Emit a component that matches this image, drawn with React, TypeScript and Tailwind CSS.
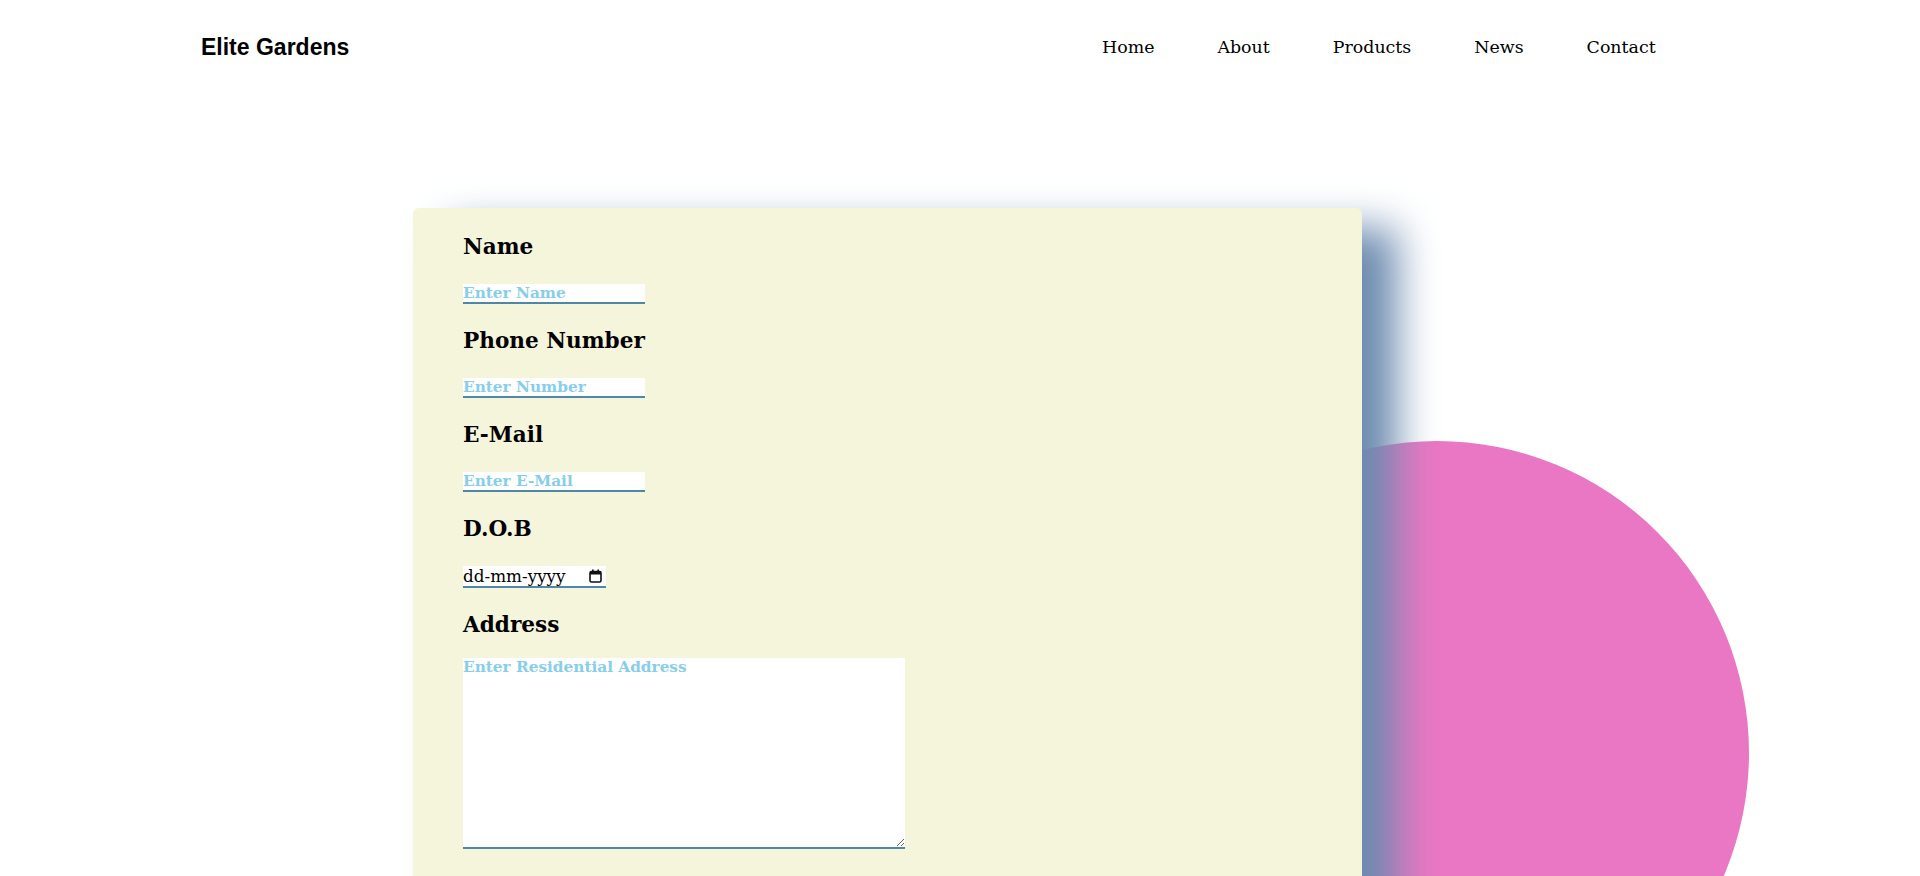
export default function App() {
  const links = ["Home", "About", "Products", "News", "Contact"];
  const inputCls =
    "block w-[182px] h-[20px] bg-white border-b-2 border-[#4f88a6] p-0 text-[15.3px] leading-[18px] font-bold text-[#87ceeb] placeholder:text-[#87ceeb] placeholder:font-bold outline-none";
  const labelCls = "block text-[21.6px] leading-[22px] font-bold text-black";
  return (
    <div className="relative min-h-[2140px] bg-white font-['DejaVu_Serif',serif] text-black overflow-hidden">
      <header className="flex items-start pl-[201px] h-[90px]">
        <div className="w-[901px] shrink-0 pt-[34px] font-['Liberation_Sans',Arial,sans-serif] font-bold text-[23px] leading-[26px]">
          Elite Gardens
        </div>
        <nav className="pt-[37px]">
          <ul className="flex gap-[63px] text-[17.4px] leading-[20px]">
            {links.map((l) => (
              <li key={l}>
                <a href="#" className="text-black no-underline">
                  {l}
                </a>
              </li>
            ))}
          </ul>
        </nav>
      </header>

      <div
        aria-hidden
        className="absolute left-[1125px] top-[441px] w-[624px] h-[624px] rounded-full bg-[#ea77c3]"
      />

      <main className="relative z-10 pt-[118px] pl-[413px]">
        <form className="w-[949px] rounded-[6px] bg-[#f5f5dc] shadow-[35px_20px_40px_#6d8bb0] pl-[50px] pt-[28px] pb-[120px] flex flex-col items-start">
          <label className={labelCls}>Name</label>
          <input type="text" placeholder="Enter Name" className={inputCls + " mt-[26px]"} />

          <label className={labelCls + " mt-[26px]"}>Phone Number</label>
          <input type="text" placeholder="Enter Number" className={inputCls + " mt-[26px]"} />

          <label className={labelCls + " mt-[26px]"}>E-Mail</label>
          <input type="text" placeholder="Enter E-Mail" className={inputCls + " mt-[26px]"} />

          <label className={labelCls + " mt-[26px]"}>D.O.B</label>
          <div className="mt-[26px] flex w-[143px] h-[22px] items-center justify-between bg-white border-b-2 border-[#4f88a6] pr-[4px]">
            <span className="text-[16.8px] leading-[18px] text-black whitespace-nowrap">dd-mm-yyyy</span>
            <svg width="13" height="14" viewBox="0 0 13 14" aria-hidden className="shrink-0">
              <rect x="1" y="2.5" width="11" height="10.5" rx="1.5" fill="none" stroke="#111" strokeWidth="1.6" />
              <rect x="1" y="2.5" width="11" height="3" fill="#111" />
              <rect x="3" y="0.5" width="1.6" height="3" fill="#111" />
              <rect x="8.4" y="0.5" width="1.6" height="3" fill="#111" />
            </svg>
          </div>

          <label className={labelCls + " mt-[26px]"}>Address</label>
          <textarea
            placeholder="Enter Residential Address"
            className="mt-[22px] block w-[442px] h-[191px] bg-white border-b-2 border-[#4f88a6] p-0 text-[15.3px] leading-[18px] font-bold text-[#87ceeb] placeholder:text-[#87ceeb] placeholder:font-bold outline-none resize"
          />
        </form>
      </main>
    </div>
  );
}
